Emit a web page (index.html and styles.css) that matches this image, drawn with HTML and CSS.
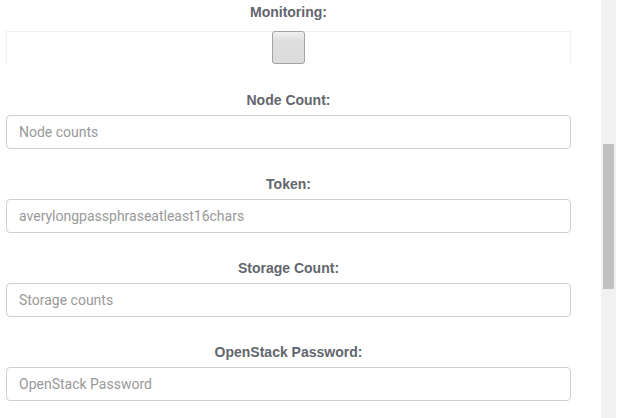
FILE: index.html
```html
<!DOCTYPE html>
<html>
<head>
<meta charset="utf-8">
<link rel="stylesheet" href="styles.css">
</head>
<body>
<div class="page">
  <div class="content">
    <div class="field first">
      <label class="label">Monitoring:</label>
      <div class="check-row"><span class="checkbox"></span></div>
    </div>
    <div class="field after-check">
      <label class="label">Node Count:</label>
      <div class="input placeholder">Node counts</div>
    </div>
    <div class="field">
      <label class="label">Token:</label>
      <div class="input placeholder">averylongpassphraseatleast16chars</div>
    </div>
    <div class="field">
      <label class="label">Storage Count:</label>
      <div class="input placeholder">Storage counts</div>
    </div>
    <div class="field">
      <label class="label">OpenStack Password:</label>
      <div class="input placeholder">OpenStack Password</div>
    </div>
  </div>
  <div class="scrollbar"><div class="thumb"></div></div>
</div>
</body>
</html>
```
FILE: styles.css
```css
html, body { margin: 0; padding: 0; background: #fff; }
body { font-family: Roboto, "Liberation Sans", Arial, sans-serif; width: 627px; height: 418px; overflow: hidden; }
.page { display: flex; height: 418px; }
.content { width: 565px; margin-left: 6px; flex: none; }
.field { display: flex; flex-direction: column; margin-top: 25px; }
.field.first { margin-top: 2px; }
.field.after-check { margin-top: 26px; }
.label { display: block; text-align: center; font-weight: bold; font-size: 14px; line-height: 20px; color: #62666d; margin-bottom: 5px; font-family: "Liberation Sans", Arial, sans-serif; }
.first .label { margin-bottom: 9px; }
.check-row { height: 33px; border: 1px solid #f0f0f0; border-bottom: none; box-sizing: border-box; display: flex; justify-content: center; }
.checkbox { width: 33px; height: 33px; margin-top: -1px; box-sizing: border-box; border: 1px solid #a3a3a3; border-radius: 3px; background: linear-gradient(#f0f0f0, #dedede 30%, #dcdcdc); }
.input { height: 34px; box-sizing: border-box; border: 1px solid #cfcfcf; border-radius: 4px; padding: 0 12px; display: flex; align-items: center; font-size: 14px; }
.placeholder { color: #999; }
.scrollbar { margin-left: 30px; width: 15px; background: #f1f1f1; height: 418px; position: relative; flex: none; }
.thumb { position: absolute; left: 2px; right: 2px; top: 144px; height: 145px; background: #c1c1c1; }
```
